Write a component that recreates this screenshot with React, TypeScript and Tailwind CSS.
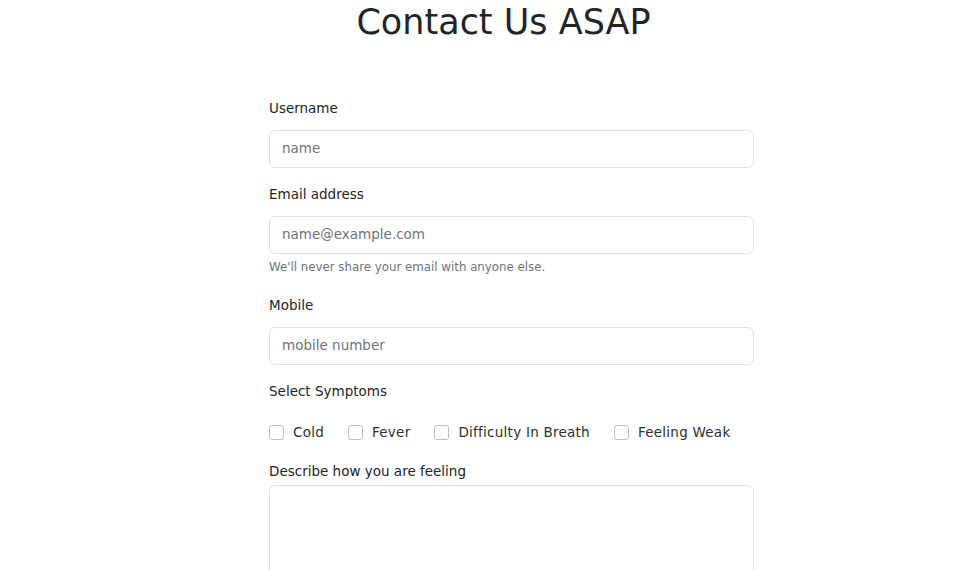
import React from "react";

const font = { fontFamily: '"DejaVu Sans", Verdana, sans-serif', fontVariantLigatures: "none" as const };

function Field({ label, placeholder, className = "" }: { label: string; placeholder: string; className?: string }) {
  return (
    <div className={className}>
      <label className="block text-[13.5px] leading-[20px] text-[#212529] mb-[12px]">{label}</label>
      <input
        type="text"
        placeholder={placeholder}
        className="block w-full h-[38px] rounded-[6px] border border-[#dee2e6] bg-white px-[12px] pb-[3px] text-[13.5px] text-[#212529] placeholder:text-[#6c757d] outline-none [font-variant-ligatures:none]"
      />
    </div>
  );
}

function Check({ label }: { label: string }) {
  return (
    <label className="flex items-center gap-[9px] text-[13.5px] leading-[20px] text-[#2b2f33]">
      <span className="block w-[15px] h-[15px] rounded-[3px] border border-[#bfbfbf] bg-white" />
      <span className="tracking-[0.25px] [font-variant-ligatures:none]">{label}</span>
    </label>
  );
}

export default function App() {
  return (
    <div className="min-h-[570px] bg-white overflow-hidden [font-variant-ligatures:none]" style={font}>
      <div className="pl-[64px]">
        <h1 className="text-center text-[35px] leading-[42px] text-[#212529] font-normal pt-[1px] pr-[16px]">Contact Us ASAP</h1>
        <form className="mx-auto w-[485px] mt-[55px]">
          <Field label="Username" placeholder="name" />
          <Field label="Email address" placeholder="name@example.com" className="mt-[16px]" />
          <div className="mt-[4px] text-[11.8px] leading-[18px] text-[#6c757d]">We'll never share your email with anyone else.</div>
          <Field label="Mobile" placeholder="mobile number" className="mt-[19px]" />
          <div className="mt-[16px] text-[13.5px] leading-[20px] text-[#212529]">Select Symptoms</div>
          <div className="mt-[21px] flex items-center gap-[24px]">
            <Check label="Cold" />
            <Check label="Fever" />
            <Check label="Difficulty In Breath" />
            <Check label="Feeling Weak" />
          </div>
          <div className="mt-[19px] text-[13.5px] leading-[20px] text-[#212529] mb-[4px]">Describe how you are feeling</div>
          <textarea className="block w-full h-[120px] rounded-[6px] border border-[#dee2e6] bg-white outline-none resize-none" />
        </form>
      </div>
    </div>
  );
}
